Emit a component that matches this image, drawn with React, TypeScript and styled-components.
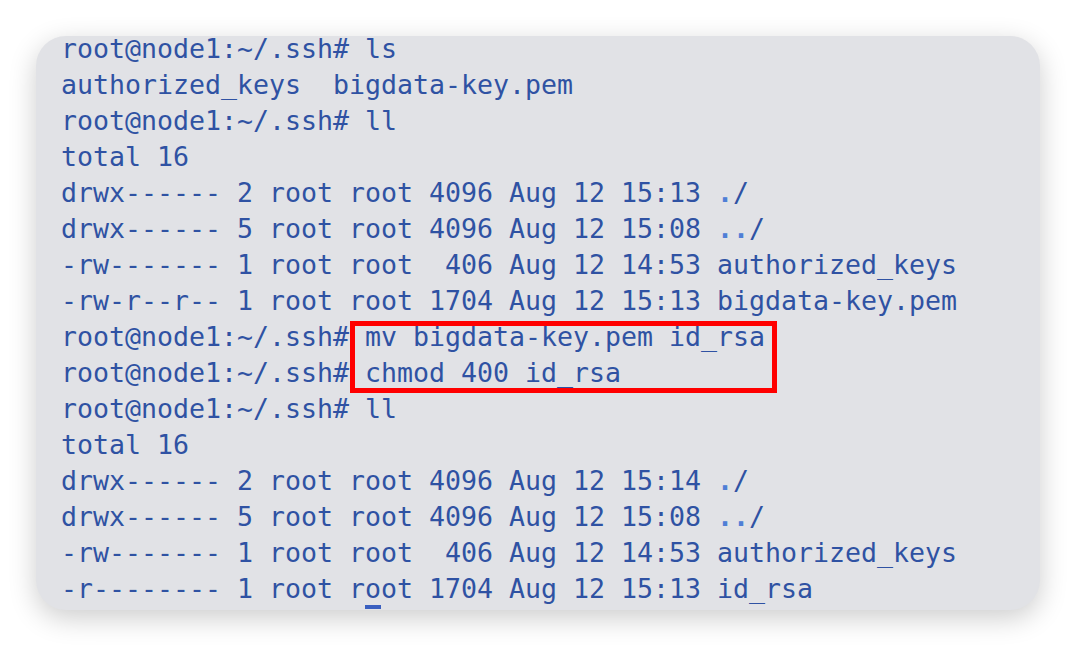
import React from "react";
import styled, { createGlobalStyle } from "styled-components";

const Global = createGlobalStyle`
  html, body { margin: 0; padding: 0; background: #ffffff; }
  #root { width: 1076px; height: 646px; }
`;

const Page = styled.div`
  box-sizing: border-box;
  width: 1076px;
  height: 646px;
  padding: 36px 36px 0 36px;
  background: #ffffff;
`;

const Card = styled.div`
  box-sizing: border-box;
  width: 1004px;
  height: 574px;
  border-radius: 30px;
  background: #e1e2e6;
  box-shadow: 0 8px 28px rgba(0, 0, 0, 0.2);
  overflow: hidden;
  padding-left: 25px;
`;

const Screen = styled.div`
  margin-top: -5px;
  display: flex;
  flex-direction: column;
  font-family: "DejaVu Sans Mono", "Liberation Mono", monospace;
  font-size: 26.58px;
  color: #2f52a3;
`;

const Line = styled.div`
  height: 36px;
  line-height: 36px;
  white-space: pre;
`;

const Group = styled.div`
  position: relative;
  display: flex;
  flex-direction: column;
`;

const Highlight = styled.div`
  position: absolute;
  left: 289px;
  top: 2px;
  width: 427px;
  height: 72px;
  box-sizing: border-box;
  border: 5px solid #ff0000;
  pointer-events: none;
`;

const Dot = styled.span`
  color: #4f7fd6;
  font-weight: bold;
`;

const Cursor = styled.span`
  position: relative;
  &::after {
    content: "";
    position: absolute;
    left: 0;
    right: 0;
    top: 32px;
    height: 4px;
    background: #3a5fc0;
  }
`;

const P = "root@node1:~/.ssh# ";

export default function App() {
  return (
    <>
      <Global />
      <Page>
        <Card>
          <Screen>
            <Line>{P}ls</Line>
            <Line>authorized_keys  bigdata-key.pem</Line>
            <Line>{P}ll</Line>
            <Line>total 16</Line>
            <Line>drwx------ 2 root root 4096 Aug 12 15:13 <Dot>.</Dot>/</Line>
            <Line>drwx------ 5 root root 4096 Aug 12 15:08 <Dot>..</Dot>/</Line>
            <Line>-rw------- 1 root root  406 Aug 12 14:53 authorized_keys</Line>
            <Line>-rw-r--r-- 1 root root 1704 Aug 12 15:13 bigdata-key.pem</Line>
            <Group>
              <Line>{P}mv bigdata-key.pem id_rsa</Line>
              <Line>{P}chmod 400 id_rsa</Line>
              <Highlight />
            </Group>
            <Line>{P}ll</Line>
            <Line>total 16</Line>
            <Line>drwx------ 2 root root 4096 Aug 12 15:14 <Dot>.</Dot>/</Line>
            <Line>drwx------ 5 root root 4096 Aug 12 15:08 <Dot>..</Dot>/</Line>
            <Line>-rw------- 1 root root  406 Aug 12 14:53 authorized_keys</Line>
            <Line>-r-------- 1 root r<Cursor>o</Cursor>ot 1704 Aug 12 15:13 id_rsa</Line>
          </Screen>
        </Card>
      </Page>
    </>
  );
}
